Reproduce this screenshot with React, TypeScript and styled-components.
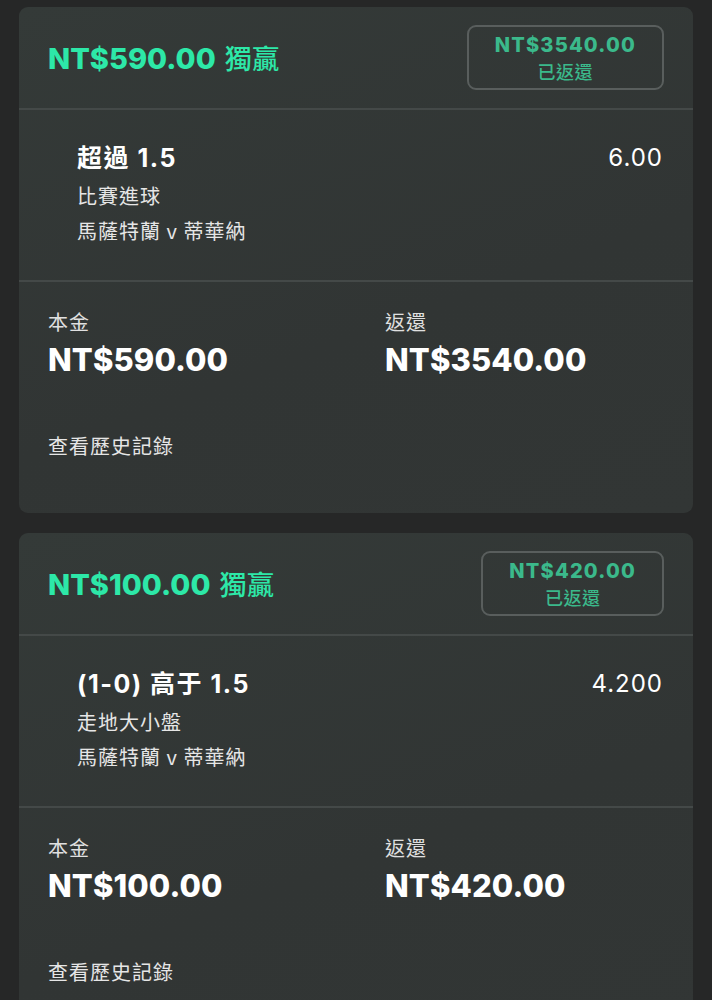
import * as React from "react";
import styled, { createGlobalStyle } from "styled-components";

interface Bet {
  stake: string;
  returns: string;
  selection: string;
  market: string;
  event: string;
  odds: string;
}

const BETS: Bet[] = [
  {
    stake: "NT$590.00",
    returns: "NT$3540.00",
    selection: "超過 1.5",
    market: "比賽進球",
    event: "馬薩特蘭 v 蒂華納",
    odds: "6.00",
  },
  {
    stake: "NT$100.00",
    returns: "NT$420.00",
    selection: "(1-0) 高于 1.5",
    market: "走地大小盤",
    event: "馬薩特蘭 v 蒂華納",
    odds: "4.200",
  },
];

const latin = `Inter, "Noto Sans CJK TC", sans-serif`;
const cjk = `"Noto Sans CJK TC", sans-serif`;

const GlobalStyle = createGlobalStyle`
  html, body {
    margin: 0;
    padding: 0;
    background: #262727;
  }
  body {
    font-family: ${latin};
    color: #f2f2f2;
  }
`;

const Page = styled.div`
  display: flex;
  flex-direction: column;
  gap: 20px;
  padding: 7px 19px 20px;
  min-height: 1000px;
  box-sizing: border-box;
  background: #262727;
`;

const Card = styled.div`
  background: linear-gradient(160deg, #343a38 0%, #313534 60%, #323635 100%);
  border-radius: 9px;
  overflow: hidden;
`;

const Header = styled.div`
  display: flex;
  align-items: center;
  justify-content: space-between;
  padding: 18px 29px;
  border-bottom: 2px solid #444948;
`;

const Title = styled.div`
  font-size: 29px;
  font-weight: 800;
  color: #2de8a8;
  line-height: 36px;
  margin-top: 1px;
`;

const TitleCjk = styled.span`
  font-family: ${cjk};
  font-size: 27px;
  font-weight: 500;
  margin-left: 9px;
  letter-spacing: 0.5px;
`;

const ReturnBox = styled.div`
  display: flex;
  flex-direction: column;
  align-items: center;
  padding: 4px 26px;
  border: 2px solid #595e5d;
  border-radius: 9px;
  color: #3bb98b;
`;

const ReturnAmount = styled.div`
  font-size: 20px;
  font-weight: 800;
  letter-spacing: 1.2px;
  line-height: 28px;
`;

const ReturnLabel = styled.div`
  font-family: ${cjk};
  font-size: 18px;
  font-weight: 500;
  letter-spacing: 0.5px;
  line-height: 25px;
`;

const Selection = styled.div`
  display: flex;
  justify-content: space-between;
  align-items: flex-start;
  padding: 31px 30px 32px 58px;
  border-bottom: 2px solid #444948;
`;

const SelectionInfo = styled.div`
  display: flex;
  flex-direction: column;
`;

const SelectionName = styled.div`
  font-size: 25px;
  font-weight: 700;
  letter-spacing: 1.5px;
  line-height: 34px;
  color: #ffffff;
`;

const Meta = styled.div<{ $gap?: number }>`
  font-family: ${cjk};
  font-size: 20px;
  letter-spacing: 1px;
  line-height: 35px;
  color: #e6e6e6;
  margin-top: ${(p) => p.$gap ?? 0}px;
`;

const Odds = styled.div`
  font-size: 24px;
  font-weight: 400;
  letter-spacing: 1px;
  line-height: 34px;
  color: #ffffff;
`;

const Totals = styled.div`
  display: grid;
  grid-template-columns: 1fr 1fr;
  padding-top: 26px;
`;

const TotalCell = styled.div`
  padding-left: 29px;
`;

const TotalLabel = styled.div`
  font-family: ${cjk};
  font-size: 20px;
  letter-spacing: 1px;
  line-height: 28px;
  color: #e0e0e0;
`;

const TotalValue = styled.div`
  margin-top: 4px;
  font-size: 31px;
  font-weight: 800;
  letter-spacing: 0.1px;
  line-height: 40px;
  color: #ffffff;
`;

const HistoryLink = styled.div`
  padding: 51px 29px 52px;
  font-family: ${cjk};
  font-size: 20px;
  letter-spacing: 1px;
  line-height: 30px;
  color: #e6e6e6;
`;

const BetCard: React.FC<{ bet: Bet }> = ({ bet }) => (
  <Card>
    <Header>
      <Title>
        {bet.stake}
        <TitleCjk>獨贏</TitleCjk>
      </Title>
      <ReturnBox>
        <ReturnAmount>{bet.returns}</ReturnAmount>
        <ReturnLabel>已返還</ReturnLabel>
      </ReturnBox>
    </Header>
    <Selection>
      <SelectionInfo>
        <SelectionName>{bet.selection}</SelectionName>
        <Meta $gap={3}>{bet.market}</Meta>
        <Meta>{bet.event}</Meta>
      </SelectionInfo>
      <Odds>{bet.odds}</Odds>
    </Selection>
    <Totals>
      <TotalCell>
        <TotalLabel>本金</TotalLabel>
        <TotalValue>{bet.stake}</TotalValue>
      </TotalCell>
      <TotalCell>
        <TotalLabel>返還</TotalLabel>
        <TotalValue>{bet.returns}</TotalValue>
      </TotalCell>
    </Totals>
    <HistoryLink>查看歷史記錄</HistoryLink>
  </Card>
);

const App: React.FC = () => (
  <>
    <GlobalStyle />
    <Page>
      {BETS.map((bet, i) => (
        <BetCard key={i} bet={bet} />
      ))}
    </Page>
  </>
);

export default App;
